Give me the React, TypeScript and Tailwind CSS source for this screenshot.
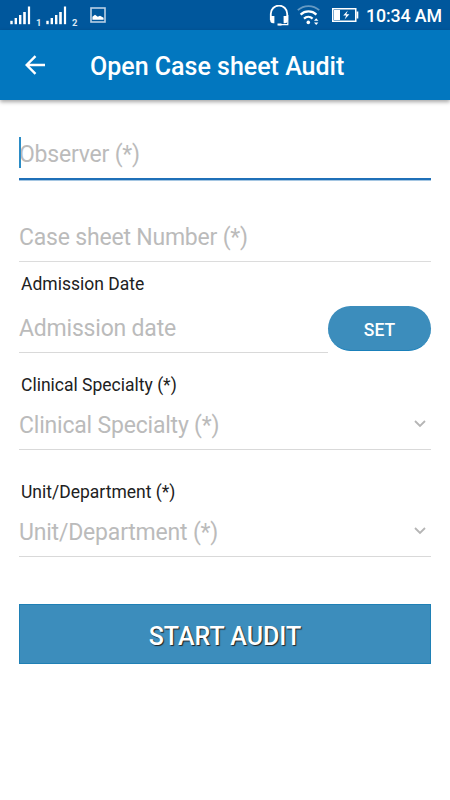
import { ReactNode } from "react";

function SignalBars({ sim }: { sim: string }) {
  return (
    <div className="flex items-end">
      <svg width="21" height="19" viewBox="0 0 21 19" fill="#fff">
        <rect x="0.3" y="14.8" width="2.4" height="3.4" />
        <rect x="4.6" y="12" width="2.4" height="6.2" />
        <rect x="9" y="9" width="2.4" height="9.2" />
        <rect x="13.2" y="6" width="2.6" height="12.2" />
        <rect x="17.9" y="0.5" width="2.2" height="17.7" />
      </svg>
      <span className="ml-[5px] w-[6px] text-[9.5px] leading-[5px] font-bold text-[#dbe8f4]">{sim}</span>
    </div>
  );
}

function StatusBar() {
  return (
    <div className="flex h-[30px] items-center bg-[#00579c] text-white">
      <div className="flex items-center pl-[10px]">
        <SignalBars sim="1" />
        <div className="w-[4px]" />
        <SignalBars sim="2" />
        <svg className="ml-[12px]" width="16" height="16" viewBox="0 0 16 16">
          <rect x="1" y="1" width="14" height="14" fill="none" stroke="#b9d0e5" strokeWidth="1.6" />
          <path d="M2.4 12.8V9.8l2.6-2 2.8 2 2.2-1 3.6 2v2z" fill="#fff" />
        </svg>
      </div>
      <div className="ml-auto flex items-center pr-[8px]">
        <svg width="20" height="21" viewBox="0 0 20 21" fill="none" stroke="#fff">
          <path d="M1.8 15V8.8a8.2 8.2 0 0 1 16.4 0V15" strokeWidth="1.8" />
          <path d="M1.2 11h4.2v7.2H4.2a3 3 0 0 1-3-3z" fill="#fff" stroke="none" />
          <path d="M18.8 11h-4.2v7.2h1.2a3 3 0 0 0 3-3z" fill="#fff" stroke="none" />
          <path d="M18.8 10v9.6H9.5" strokeWidth="1.2" />
          <path d="M8.5 19.5h4" strokeWidth="2" />
        </svg>
        <svg className="ml-[8px]" width="23" height="22" viewBox="0 0 23 22" fill="none" stroke="#fff">
          <path d="M0.8 6.2a16 16 0 0 1 21.4 0" strokeWidth="1.8" opacity="0.4" />
          <path d="M3.6 10.6a11.5 11.5 0 0 1 15.8 0" strokeWidth="2.2" />
          <path d="M7 14.6a6.5 6.5 0 0 1 8.6 0" strokeWidth="2.2" />
          <circle cx="11.3" cy="18.4" r="1.8" fill="#fff" stroke="none" />
          <path d="M17 16.8l2.2-2.6 2.2 2.6zM17 18.4l2.2 2.6 2.2-2.6z" fill="#fff" stroke="none" />
        </svg>
        <svg className="ml-[12px]" width="27" height="14" viewBox="0 0 27 14">
          <rect x="0.75" y="0.75" width="23" height="12.5" fill="none" stroke="#fff" strokeWidth="1.5" />
          <rect x="2" y="2" width="6" height="10" fill="#fff" />
          <rect x="24.5" y="3.5" width="1.8" height="7" fill="#fff" />
          <path d="M15.8 2.6l-4.6 5h3l-1.6 3.8 4.8-5.2h-3.1z" fill="#fff" />
        </svg>
        <span className="ml-[7px] pt-[2px] text-[17.8px] leading-[28px] font-medium tracking-[-0.1px] whitespace-nowrap">
          10:34 AM
        </span>
      </div>
    </div>
  );
}

function Header() {
  return (
    <header className="relative flex h-[70px] items-center bg-[#0277bf] text-white shadow-[0_2px_4px_rgba(0,0,0,0.35)]">
      <svg className="ml-[25px]" width="21" height="20" viewBox="0 0 21 20" fill="none" stroke="#fff" strokeWidth="2.4">
        <path d="M20 10H2M10.5 1.2L1.7 10l8.8 8.8" />
      </svg>
      <h1 className="ml-[44px] pt-[3px] text-[25px] leading-[30px] font-medium whitespace-nowrap">
        Open Case sheet Audit
      </h1>
    </header>
  );
}

function Label({ children }: { children: ReactNode }) {
  return <label className="block h-[20px] pl-[2px] text-[17.5px] leading-[20px] text-[#212121]">{children}</label>;
}

function Placeholder({ children }: { children: ReactNode }) {
  return (
    <span className="text-[23px] leading-[30px] tracking-[-0.2px] whitespace-nowrap text-[#bbb]">{children}</span>
  );
}

function SelectField({ label }: { label: string }) {
  return (
    <div>
      <Label>{label}</Label>
      <div className="flex h-[55px] items-start justify-between border-b border-[#d9d9d9] pt-[16px]">
        <Placeholder>{label}</Placeholder>
        <svg className="mt-[9px] mr-[5px]" width="12" height="8" viewBox="0 0 12 8" fill="none" stroke="#b5b5b5" strokeWidth="1.8">
          <path d="M1 1l5 5 5-5" />
        </svg>
      </div>
    </div>
  );
}

export default function App() {
  return (
    <div className="h-[800px] w-[450px] overflow-hidden bg-white font-[Roboto,sans-serif]">
      <StatusBar />
      <Header />
      <main className="px-[19px]">
        <div className="relative flex h-[80px] items-start border-b-2 border-[#1f70b8] pt-[40px]">
          <div className="absolute top-[37px] left-0 h-[31px] w-[2px] bg-[#2b8cc6]" />
          <Placeholder>Observer (*)</Placeholder>
        </div>
        <div className="h-px bg-[#a5c6e2]" />
        <div className="flex h-[81px] items-start border-b border-[#dcdcdc] pt-[42px]">
          <Placeholder>Case sheet Number (*)</Placeholder>
        </div>
        <div className="mt-[12px]">
          <Label>Admission Date</Label>
          <div className="flex h-[59px] items-start">
            <div className="h-full flex-1 border-b border-[#d9d9d9] pt-[20px]">
              <Placeholder>Admission date</Placeholder>
            </div>
            <button className="mt-[12px] h-[45px] w-[103px] rounded-full border-b border-[#1a80ba] bg-[#3c8dbc] pt-[4px] text-[17.5px] font-medium text-white">
              SET
            </button>
          </div>
        </div>
        <div className="mt-[22px] flex flex-col gap-[32px]">
          <SelectField label="Clinical Specialty (*)" />
          <SelectField label="Unit/Department (*)" />
        </div>
        <button className="mt-[47px] h-[60px] w-full border border-[#1f80b5] bg-[#3c8dbc] pt-[5px] text-[25px] font-medium text-white [text-shadow:1px_1px_1px_#222]">
          START AUDIT
        </button>
      </main>
    </div>
  );
}
